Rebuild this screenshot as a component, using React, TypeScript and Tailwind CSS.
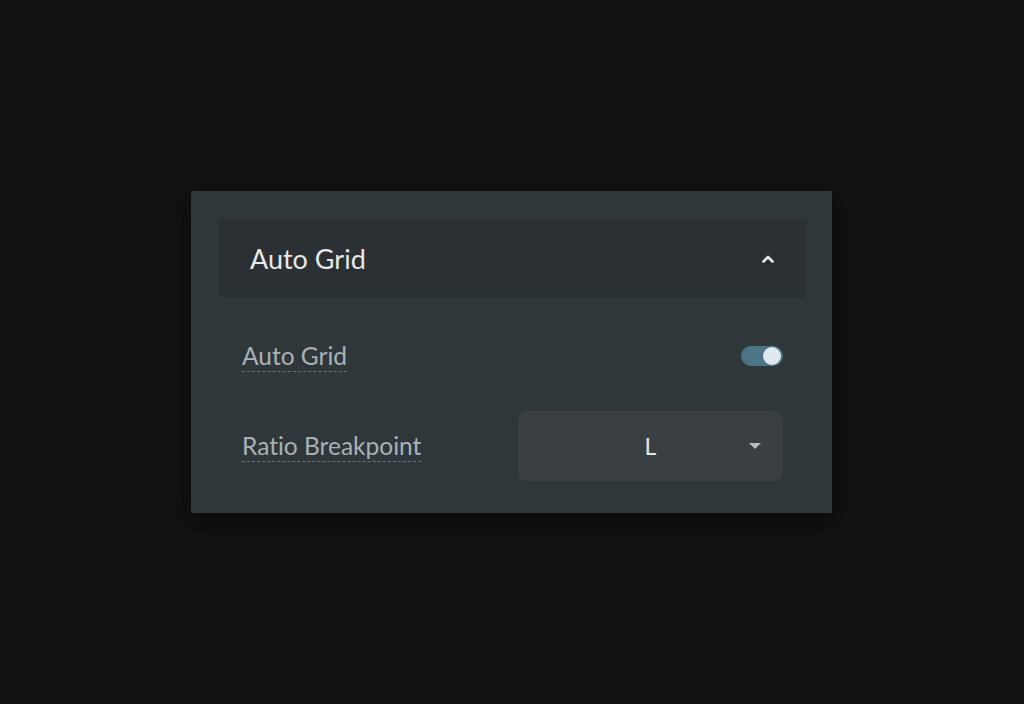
import React from "react";

/* ─── Small switch ─── */
function Toggle() {
  return (
    <div className="relative w-[42px] h-[20px] rounded-full bg-[#4b7487]">
      <div className="absolute right-[2px] top-[1px] w-[18px] h-[18px] rounded-full bg-[#dfeaf0]" />
    </div>
  );
}

export default function App() {
  return (
    <div className="w-[1024px] h-[704px] bg-[#121212] flex items-center justify-center font-['Lato',sans-serif] [font-variant-ligatures:none]">
      <div className="w-[641px] h-[322px] mr-[1px] bg-[#30373b] shadow-[0_8px_24px_rgba(0,0,0,0.5)] pl-[28px] pr-[25px] pt-[28px]">
        {/* Header */}
        <div className="h-[79px] bg-[#2a3033] rounded-[2px] flex items-center justify-between pl-[31px] pr-[31px]">
          <span className="text-[27px] leading-[32px] text-[#e6e8e9]">Auto Grid</span>
          <svg width="16" height="16" viewBox="0 0 16 16">
            <path d="M3.5 10.5 L8 6 L12.5 10.5" fill="none" stroke="#e6e8e9" strokeWidth="2.6" strokeLinecap="round" strokeLinejoin="round" />
          </svg>
        </div>

        {/* Rows */}
        <div className="pl-[23px] pr-[24px]">
          <div className="h-[20px] mt-[48px] flex items-center justify-between">
            <span className="text-[24.5px] text-[#aab1b5] leading-[30px] border-b border-dashed border-[#6b7276]">Auto Grid</span>
            <Toggle />
          </div>
          <div className="mt-[45px] flex items-center justify-between">
            <span className="text-[24.5px] text-[#aab1b5] leading-[30px] border-b border-dashed border-[#6b7276]">Ratio Breakpoint</span>
            <div className="relative w-[265px] h-[70px] rounded-[8px] bg-[#3a3f43] flex items-center justify-center">
              <span className="text-[23px] text-[#e4e6e7]">L</span>
              <svg width="14" height="8" viewBox="0 0 14 8" className="absolute right-[21px] top-[31px]">
                <path d="M1 1 L13 1 L7 7 Z" fill="#b8bcbe" />
              </svg>
            </div>
          </div>
        </div>
      </div>
    </div>
  );
}
